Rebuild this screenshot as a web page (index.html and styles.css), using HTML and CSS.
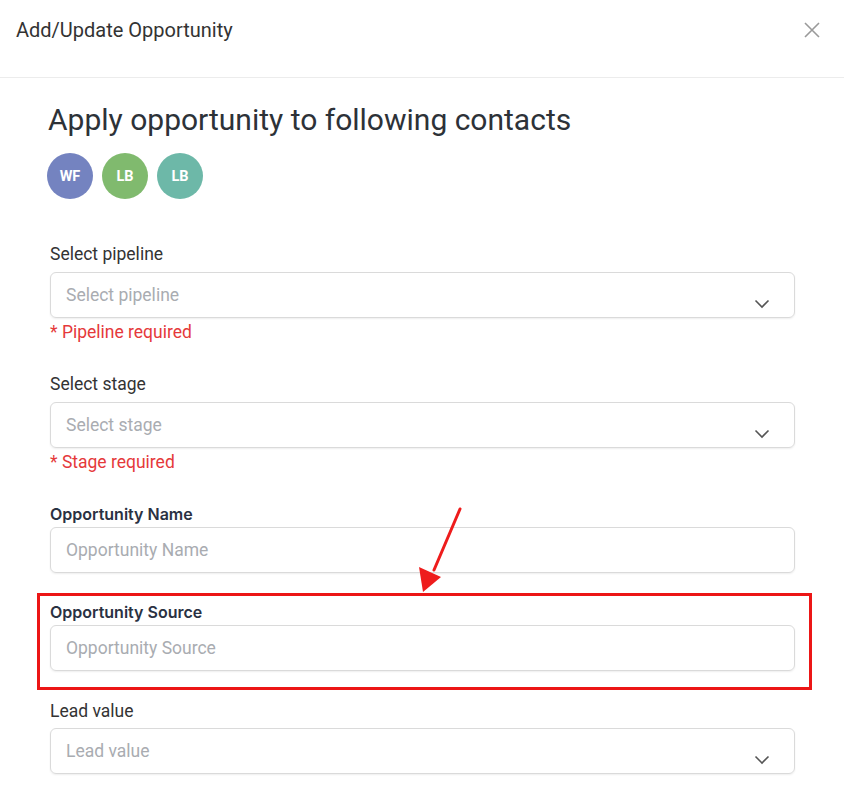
FILE: index.html
```html
<!DOCTYPE html>
<html lang="en">
<head>
  <meta charset="UTF-8" />
  <meta name="viewport" content="width=device-width, initial-scale=1.0" />
  <title>Add/Update Opportunity</title>
  <link rel="stylesheet" href="styles.css">
</head>
<body>
  <div class="modal">
    <div class="modal-header">
      <span class="modal-title">Add/Update Opportunity</span>
      <span class="close-btn">
        <svg width="18" height="18" viewBox="0 0 18 18"><path d="M2 2L16 16M16 2L2 16" stroke="#9a9a9a" stroke-width="1.6" fill="none"/></svg>
      </span>
    </div>

    <div class="modal-body">
      <h1 class="heading">Apply opportunity to following contacts</h1>
      <div class="avatars">
        <span class="avatar avatar-blue">WF</span>
        <span class="avatar avatar-green">LB</span>
        <span class="avatar avatar-teal">LB</span>
      </div>

      <div class="form">
        <div class="field">
          <label class="label">Select pipeline</label>
          <div class="input select">
            <span class="placeholder">Select pipeline</span>
            <svg class="chevron" width="16" height="10" viewBox="0 0 16 10"><path d="M1.5 1.5L8 8L14.5 1.5" stroke="#555" stroke-width="1.6" fill="none"/></svg>
          </div>
          <div class="error">* Pipeline required</div>
        </div>

        <div class="field">
          <label class="label">Select stage</label>
          <div class="input select">
            <span class="placeholder">Select stage</span>
            <svg class="chevron" width="16" height="10" viewBox="0 0 16 10"><path d="M1.5 1.5L8 8L14.5 1.5" stroke="#555" stroke-width="1.6" fill="none"/></svg>
          </div>
          <div class="error">* Stage required</div>
        </div>

        <div class="field field-name">
          <label class="label label-strong">Opportunity Name</label>
          <div class="input">
            <span class="placeholder">Opportunity Name</span>
          </div>
        </div>

        <div class="field highlight">
          <label class="label label-strong">Opportunity Source</label>
          <div class="input">
            <span class="placeholder">Opportunity Source</span>
          </div>
        </div>

        <div class="field field-lead">
          <label class="label">Lead value</label>
          <div class="input select">
            <span class="placeholder">Lead value</span>
            <svg class="chevron" width="16" height="10" viewBox="0 0 16 10"><path d="M1.5 1.5L8 8L14.5 1.5" stroke="#555" stroke-width="1.6" fill="none"/></svg>
          </div>
        </div>
      </div>
    </div>

    <!-- annotation arrow pointing at the highlighted field -->
    <svg class="arrow" width="60" height="100" viewBox="0 0 60 100">
      <line x1="50" y1="9" x2="24" y2="70" stroke="#ee1c1c" stroke-width="3" stroke-linecap="round"/>
      <polygon points="13,92 9,67 31,77" fill="#ee1c1c"/>
    </svg>
  </div>
</body>
</html>
```

FILE: styles.css
```css
body {
  margin: 0;
  padding: 0;
  background: #fff;
  font-family: Roboto, "Liberation Sans", sans-serif;
  color: #333;
}
.modal {
  position: relative;
  width: 844px;
  height: 794px;
  overflow: hidden;
  background: #fff;
}
.modal-header {
  height: 78px;
  box-sizing: border-box;
  padding: 17px 23px 0 16px;
  display: flex;
  justify-content: space-between;
  align-items: flex-start;
  border-bottom: 1px solid #ececec;
}
.modal-title {
  font-size: 20px;
  line-height: 26px;
  color: #333;
}
.close-btn {
  margin-top: 4px;
  display: flex;
}
.modal-body {
  padding: 24px 49px 0 50px;
}
.heading {
  margin: 0 0 0 -2px;
  font-size: 30px;
  line-height: 36px;
  font-weight: 400;
  color: #2d3238;
}
.avatars {
  display: flex;
  gap: 9px;
  margin: 15px 0 0 -3px;
}
.avatar {
  width: 46px;
  height: 46px;
  border-radius: 50%;
  display: flex;
  align-items: center;
  justify-content: center;
  color: #fff;
  font-size: 14.5px;
  font-weight: 700;
}
.avatar-blue { background: #7483c0; }
.avatar-green { background: #80ba6e; }
.avatar-teal { background: #6db8a8; }
.form {
  margin-top: 45px;
}
.field {
  margin-bottom: 32px;
}
.label {
  display: block;
  font-size: 17.5px;
  line-height: 20px;
  color: #333;
  margin-bottom: 8px;
}
.label-strong {
  font-family: Inter, "Noto Sans", sans-serif;
  font-weight: 600;
  font-size: 16px;
  color: #2a3142;
  margin-bottom: 3px;
}
.input {
  position: relative;
  height: 46px;
  box-sizing: border-box;
  border: 1px solid #dadada;
  border-radius: 6px;
  box-shadow: 0 1px 2px rgba(0, 0, 0, 0.07);
  padding: 0 15px;
  display: flex;
  align-items: center;
}
.placeholder {
  font-size: 17.5px;
  color: #a9acb1;
}
.chevron {
  position: absolute;
  right: 24px;
  top: 26px;
}
.error {
  margin-top: 4px;
  font-size: 17.5px;
  line-height: 20px;
  color: #e5393b;
}
.field-name {
  margin-bottom: 20px;
}
.highlight {
  margin: 0 -17px 0 -13px;
  padding: 6px 14px 16px 10px;
  border: 3px solid #ec1616;
}
.field-lead {
  margin-top: 11px;
}
.field-lead .label {
  margin-bottom: 7px;
}
.arrow {
  position: absolute;
  left: 410px;
  top: 500px;
}
```
